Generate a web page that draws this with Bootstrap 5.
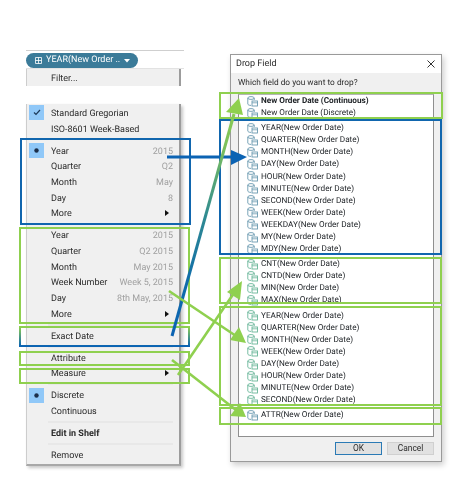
<!DOCTYPE html>
<html lang="en">
<head>
<meta charset="utf-8">
<title>Drop Field</title>
<link href="https://cdn.jsdelivr.net/npm/bootstrap@5.3.0/dist/css/bootstrap.min.css" rel="stylesheet">
<style>
html,body{margin:0;background:#fff;height:490px;overflow:hidden}
body{font-family:Roboto,"Open Sans",sans-serif;color:#2b2b2b;font-size:9px;line-height:1;text-rendering:geometricPrecision}
.page-wrap{width:474px;height:490px;filter:blur(.3px)}
.left-col{width:158px;margin-left:26px;padding-top:50px}
.shelf-bar{height:19px;border-top:1px solid #cfcfcf;border-bottom:1px solid #e2e2e2;padding-top:2px}
.field-pill{width:112px;height:15px;background:#3b7b99;color:#fff;border-radius:8px;padding-left:9px;font-size:9px;gap:4px;white-space:nowrap}
.menu-box{width:155px;background:#f0f0f0;border-left:1px solid #cdcdcd;border-right:2px solid #9c9c9c;padding-right:6px}
.menu-top{height:17px}
.menu-top>span:not(.mark-cell){padding-top:3px}
.menu-main{margin-top:18px;height:362px;padding-top:1px;border-bottom:2px solid #a8a8a8;box-shadow:2px 2px 3px rgba(0,0,0,.22)}
.menu-row{height:15.7px}
.menu-row>span:not(.mark-cell){padding-top:3px}
.mark-cell{width:15px;height:15px;margin:0 7px 0 2px;flex:none}
.mark-on{background:#90c8f8}
.hint{color:#a0a0a0}
.menu-sep{height:6.3px}
.menu-sep::after{content:"";display:block;height:1px;background:#e0e0e0;margin-left:21px;transform:translateY(2.5px)}
.dialog-box{width:212px;height:408px;margin:54px 0 0 46px;border:1px solid #9a9a9a;background:#f0f0f0;box-shadow:2px 3px 6px rgba(0,0,0,.2)}
.dlg-title{height:18px;background:#fff;padding:0 6px 0 5px;font-size:9px}
.dlg-label{height:21px;padding-left:7px;font-size:8.3px}
.field-list{width:196px;height:343px;margin-left:7px;background:#fff;border:1px solid #8f8f8f;border-top-color:#b5b5b5;padding:0 0 0 8px;font-size:8.2px}
.field-group{margin-bottom:3px}
.field-row{height:12.1px;gap:3px;white-space:nowrap}
.fico{width:11px;height:11px;flex:none}
.tone-b{color:#6b9ab0}
.tone-g{color:#68b598}
.dlg-foot{padding:5px 7px 0 0;gap:5px}
.dlg-btn{width:47px;height:13px;padding:0;border-radius:0;font-size:8.4px;line-height:1;background:#e1e1e1;color:#2b2b2b;border:1px solid #d0d0d0}
.dlg-ok{border-color:#2a7ab5}
.notes{width:474px;height:490px;pointer-events:none}
</style>
</head>
<body>
<svg width="0" height="0" class="position-absolute">
<symbol id="fi" viewBox="0 0 11 11">
<ellipse cx="4" cy="2" rx="3.2" ry="1.4" fill="none" stroke="currentColor" stroke-width=".9"/>
<path d="M.8 2v6c0 .8 1.4 1.4 3.2 1.4M7.2 2v2" fill="none" stroke="currentColor" stroke-width=".9"/>
<rect x="5" y="5" width="5.5" height="5" fill="#fff" stroke="currentColor" stroke-width=".9"/>
<path d="M5 6.8h5.5" stroke="currentColor" stroke-width=".8"/>
</symbol>
</svg>
<div class="page-wrap position-relative d-flex align-items-start">
  <div class="left-col flex-shrink-0">
    <div class="shelf-bar">
      <div class="field-pill d-flex align-items-center">
        <svg width="7" height="7" viewBox="0 0 7 7" class="flex-shrink-0"><path d="M.5.5h6v6h-6zM3.5.5v6M.5 3.5h6" fill="none" stroke="#fff" stroke-width=".8"/></svg>
        <span class="flex-grow-1">YEAR(New Order ..</span>
        <svg width="6" height="4" viewBox="0 0 6 4" class="me-2 flex-shrink-0"><path d="M0 0h6L3 3.5z" fill="#fff"/></svg>
      </div>
    </div>
    <div class="menu-box menu-top d-flex align-items-center"><span class="mark-cell"></span><span>Filter...</span></div>
    <div class="menu-box menu-main">
      <div class="menu-row d-flex align-items-center"><span class="mark-cell mark-on d-flex align-items-center justify-content-center"><svg width="8" height="7" viewBox="0 0 8 7"><path d="M1 3.5 3 5.5 7 1" fill="none" stroke="#1c3a5a" stroke-width="1.2"/></svg></span><span>Standard Gregorian</span></div>
      <div class="menu-row d-flex align-items-center"><span class="mark-cell"></span><span>ISO-8601 Week-Based</span></div>
      <div class="menu-sep"></div>
      <div class="menu-row d-flex align-items-center"><span class="mark-cell mark-on d-flex align-items-center justify-content-center"><svg width="5" height="5" viewBox="0 0 5 5"><circle cx="2.5" cy="2.5" r="2.2" fill="#1c2f4a"/></svg></span><span class="flex-grow-1">Year</span><span class="hint">2015</span></div>
      <div class="menu-row d-flex align-items-center"><span class="mark-cell"></span><span class="flex-grow-1">Quarter</span><span class="hint">Q2</span></div>
      <div class="menu-row d-flex align-items-center"><span class="mark-cell"></span><span class="flex-grow-1">Month</span><span class="hint">May</span></div>
      <div class="menu-row d-flex align-items-center"><span class="mark-cell"></span><span class="flex-grow-1">Day</span><span class="hint">8</span></div>
      <div class="menu-row d-flex align-items-center"><span class="mark-cell"></span><span class="flex-grow-1">More</span><svg width="4" height="6" viewBox="0 0 4 6" class="me-1"><path d="M0 0l4 3-4 3z" fill="#111"/></svg></div>
      <div class="menu-sep"></div>
      <div class="menu-row d-flex align-items-center"><span class="mark-cell"></span><span class="flex-grow-1">Year</span><span class="hint">2015</span></div>
      <div class="menu-row d-flex align-items-center"><span class="mark-cell"></span><span class="flex-grow-1">Quarter</span><span class="hint">Q2 2015</span></div>
      <div class="menu-row d-flex align-items-center"><span class="mark-cell"></span><span class="flex-grow-1">Month</span><span class="hint">May 2015</span></div>
      <div class="menu-row d-flex align-items-center"><span class="mark-cell"></span><span class="flex-grow-1">Week Number</span><span class="hint">Week 5, 2015</span></div>
      <div class="menu-row d-flex align-items-center"><span class="mark-cell"></span><span class="flex-grow-1">Day</span><span class="hint">8th May, 2015</span></div>
      <div class="menu-row d-flex align-items-center"><span class="mark-cell"></span><span class="flex-grow-1">More</span><svg width="4" height="6" viewBox="0 0 4 6" class="me-1"><path d="M0 0l4 3-4 3z" fill="#111"/></svg></div>
      <div class="menu-sep"></div>
      <div class="menu-row d-flex align-items-center"><span class="mark-cell"></span><span>Exact Date</span></div>
      <div class="menu-sep"></div>
      <div class="menu-row d-flex align-items-center"><span class="mark-cell"></span><span>Attribute</span></div>
      <div class="menu-row d-flex align-items-center"><span class="mark-cell"></span><span class="flex-grow-1">Measure</span><svg width="4" height="6" viewBox="0 0 4 6" class="me-1"><path d="M0 0l4 3-4 3z" fill="#111"/></svg></div>
      <div class="menu-sep"></div>
      <div class="menu-row d-flex align-items-center"><span class="mark-cell mark-on d-flex align-items-center justify-content-center"><svg width="5" height="5" viewBox="0 0 5 5"><circle cx="2.5" cy="2.5" r="2.2" fill="#1c2f4a"/></svg></span><span>Discrete</span></div>
      <div class="menu-row d-flex align-items-center"><span class="mark-cell"></span><span>Continuous</span></div>
      <div class="menu-sep"></div>
      <div class="menu-row d-flex align-items-center"><span class="mark-cell"></span><span class="fw-bold">Edit in Shelf</span></div>
      <div class="menu-sep"></div>
      <div class="menu-row d-flex align-items-center"><span class="mark-cell"></span><span>Remove</span></div>
    </div>
  </div>

  <div class="dialog-box flex-shrink-0">
    <div class="dlg-title d-flex align-items-center justify-content-between"><span>Drop Field</span>
      <svg width="8" height="8" viewBox="0 0 8 8"><path d="M.5.5l7 7M7.5.5l-7 7" stroke="#333" stroke-width="1"/></svg></div>
    <div class="dlg-label d-flex align-items-center">Which field do you want to drop?</div>
    <div class="field-list">
      <div class="field-group tone-b">
        <div class="field-row d-flex align-items-center"><svg class="fico"><use href="#fi"/></svg><span class="text-dark fw-bold">New Order Date (Continuous)</span></div>
        <div class="field-row d-flex align-items-center"><svg class="fico"><use href="#fi"/></svg><span class="text-dark">New Order Date (Discrete)</span></div>
      </div>
      <div class="field-group tone-b">
        <div class="field-row d-flex align-items-center"><svg class="fico"><use href="#fi"/></svg><span class="text-dark">YEAR(New Order Date)</span></div>
        <div class="field-row d-flex align-items-center"><svg class="fico"><use href="#fi"/></svg><span class="text-dark">QUARTER(New Order Date)</span></div>
        <div class="field-row d-flex align-items-center"><svg class="fico"><use href="#fi"/></svg><span class="text-dark">MONTH(New Order Date)</span></div>
        <div class="field-row d-flex align-items-center"><svg class="fico"><use href="#fi"/></svg><span class="text-dark">DAY(New Order Date)</span></div>
        <div class="field-row d-flex align-items-center"><svg class="fico"><use href="#fi"/></svg><span class="text-dark">HOUR(New Order Date)</span></div>
        <div class="field-row d-flex align-items-center"><svg class="fico"><use href="#fi"/></svg><span class="text-dark">MINUTE(New Order Date)</span></div>
        <div class="field-row d-flex align-items-center"><svg class="fico"><use href="#fi"/></svg><span class="text-dark">SECOND(New Order Date)</span></div>
        <div class="field-row d-flex align-items-center"><svg class="fico"><use href="#fi"/></svg><span class="text-dark">WEEK(New Order Date)</span></div>
        <div class="field-row d-flex align-items-center"><svg class="fico"><use href="#fi"/></svg><span class="text-dark">WEEKDAY(New Order Date)</span></div>
        <div class="field-row d-flex align-items-center"><svg class="fico"><use href="#fi"/></svg><span class="text-dark">MY(New Order Date)</span></div>
        <div class="field-row d-flex align-items-center"><svg class="fico"><use href="#fi"/></svg><span class="text-dark">MDY(New Order Date)</span></div>
      </div>
      <div class="field-group tone-g">
        <div class="field-row d-flex align-items-center"><svg class="fico"><use href="#fi"/></svg><span class="text-dark">CNT(New Order Date)</span></div>
        <div class="field-row d-flex align-items-center"><svg class="fico"><use href="#fi"/></svg><span class="text-dark">CNTD(New Order Date)</span></div>
        <div class="field-row d-flex align-items-center"><svg class="fico"><use href="#fi"/></svg><span class="text-dark">MIN(New Order Date)</span></div>
        <div class="field-row d-flex align-items-center"><svg class="fico"><use href="#fi"/></svg><span class="text-dark">MAX(New Order Date)</span></div>
      </div>
      <div class="field-group tone-g">
        <div class="field-row d-flex align-items-center"><svg class="fico"><use href="#fi"/></svg><span class="text-dark">YEAR(New Order Date)</span></div>
        <div class="field-row d-flex align-items-center"><svg class="fico"><use href="#fi"/></svg><span class="text-dark">QUARTER(New Order Date)</span></div>
        <div class="field-row d-flex align-items-center"><svg class="fico"><use href="#fi"/></svg><span class="text-dark">MONTH(New Order Date)</span></div>
        <div class="field-row d-flex align-items-center"><svg class="fico"><use href="#fi"/></svg><span class="text-dark">WEEK(New Order Date)</span></div>
        <div class="field-row d-flex align-items-center"><svg class="fico"><use href="#fi"/></svg><span class="text-dark">DAY(New Order Date)</span></div>
        <div class="field-row d-flex align-items-center"><svg class="fico"><use href="#fi"/></svg><span class="text-dark">HOUR(New Order Date)</span></div>
        <div class="field-row d-flex align-items-center"><svg class="fico"><use href="#fi"/></svg><span class="text-dark">MINUTE(New Order Date)</span></div>
        <div class="field-row d-flex align-items-center"><svg class="fico"><use href="#fi"/></svg><span class="text-dark">SECOND(New Order Date)</span></div>
      </div>
      <div class="field-group tone-b">
        <div class="field-row d-flex align-items-center"><svg class="fico"><use href="#fi"/></svg><span class="text-dark">ATTR(New Order Date)</span></div>
      </div>
    </div>
    <div class="dlg-foot d-flex justify-content-end">
      <button type="button" class="btn dlg-btn dlg-ok">OK</button>
      <button type="button" class="btn dlg-btn">Cancel</button>
    </div>
  </div>

  <svg class="notes position-absolute top-0 start-0" viewBox="0 0 474 490">
    <defs>
      <linearGradient id="gline" gradientUnits="userSpaceOnUse" x1="172" y1="336" x2="239" y2="98">
        <stop offset="0" stop-color="#0b63b3"/><stop offset=".22" stop-color="#0f6cab"/><stop offset=".5" stop-color="#2f8a92"/><stop offset=".8" stop-color="#7cc05c"/><stop offset="1" stop-color="#8fd04f"/>
      </linearGradient>
      <linearGradient id="gbox" gradientUnits="userSpaceOnUse" x1="0" y1="327" x2="0" y2="346">
        <stop offset="0" stop-color="#8fd04f"/><stop offset="1" stop-color="#0b63b3"/>
      </linearGradient>
    </defs>
    <g fill="none" stroke-width="2">
      <rect x="21" y="139" width="169" height="85" stroke="#1166ae"/>
      <rect x="20" y="228" width="169" height="95" stroke="#8fd04f"/>
      <rect x="20" y="327" width="169" height="19" stroke="url(#gbox)"/>
      <rect x="20" y="352" width="169" height="13" stroke="#8fd04f"/>
      <rect x="20" y="369" width="169" height="14" stroke="#8fd04f"/>
      <rect x="220" y="93" width="222" height="25" stroke="#8fd04f"/>
      <rect x="220" y="120" width="221" height="134" stroke="#1166ae"/>
      <rect x="220" y="258" width="221" height="45" stroke="#8fd04f"/>
      <rect x="220" y="307" width="221" height="98" stroke="#8fd04f"/>
      <rect x="220" y="408" width="221" height="16" stroke="#8fd04f"/>
    </g>
    <path d="M167 157H233" stroke="#0b63b3" stroke-width="3"/>
    <path d="M247 157 231 150V165z" fill="#0b63b3"/>
    <path d="M172 336 234 114" stroke="url(#gline)" stroke-width="3" fill="none"/>
    <path d="M239 98 226 112 243 115z" fill="#8fd04f"/>
    <g stroke="#8fd04f" stroke-width="2.6" fill="#8fd04f">
      <path d="M169 291 236 336"/>
      <path d="M178 375 234 293"/>
      <path d="M172 360 236 410"/>
    </g>
    <g fill="#8fd04f">
      <path d="M246 343 230 340 239 327z"/>
      <path d="M242 281 227 292 240 300z"/>
      <path d="M246 417 230 416 240 403z"/>
    </g>
  </svg>
</div>
<script src="https://cdn.jsdelivr.net/npm/bootstrap@5.3.0/dist/js/bootstrap.bundle.min.js"></script>
</body>
</html>
